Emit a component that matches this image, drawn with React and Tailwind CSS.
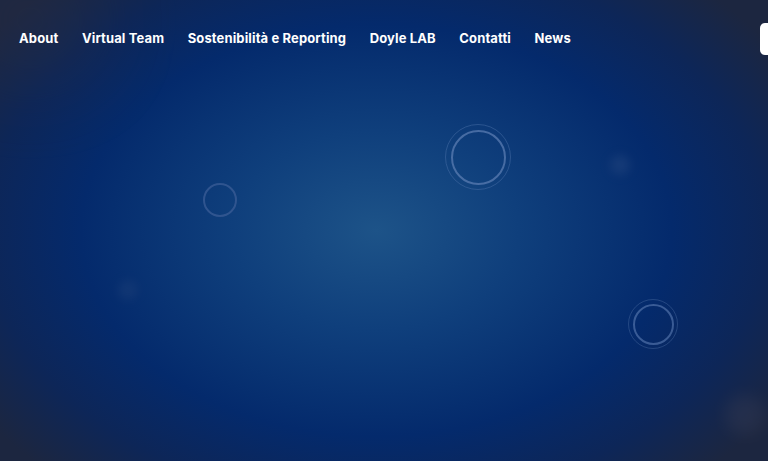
export default function App() {
  const items = ["About", "Virtual Team", "Sostenibilità e Reporting", "Doyle LAB", "Contatti", "News"];
  return (
    <div className="relative w-[768px] h-[461px] overflow-hidden bg-[#1c2640]" style={{ fontFamily: "Inter, 'Open Sans', sans-serif" }}>
      <div className="absolute inset-0 bg-[radial-gradient(ellipse_62%_72%_at_49%_50%,#1d5388_0%,#0f3f7c_30%,#042a6c_62%,#0d2658_82%,#1c2640_100%)]" />
      <div className="absolute -left-10 -top-10 w-[140px] h-[120px] rounded-full bg-[#2a2f45] opacity-40 blur-2xl" />
      {/* glows */}
      <div className="absolute left-[610px] top-[155px] w-5 h-5 rounded-full bg-[#24467f] opacity-50 blur-[5px]" />
      <div className="absolute left-[118px] top-[280px] w-5 h-5 rounded-full bg-[#21427a] opacity-40 blur-[5px]" />
      <div className="absolute left-[725px] top-[395px] w-10 h-10 rounded-full bg-[#363c54] opacity-40 blur-[8px]" />
      {/* rings */}
      <div className="absolute left-[445px] top-[124px] w-[66px] h-[66px] rounded-full border border-[#4a6fa8]/50 flex items-center justify-center">
        <div className="w-[55px] h-[55px] rounded-full border-2 border-[#5f80b5]/70" />
      </div>
      <div className="absolute left-[203px] top-[183px] w-[34px] h-[34px] rounded-full border-2 border-[#3f5f98]/70" />
      <div className="absolute left-[628px] top-[299px] w-[50px] h-[50px] rounded-full border border-[#4a6aa0]/45 flex items-center justify-center">
        <div className="w-[41px] h-[41px] rounded-full border-2 border-[#5676ad]/65" />
      </div>
      <header className="relative flex items-center h-[78px] pl-[19px]">
        <nav className="flex items-center gap-[23.5px] text-white text-[13px] font-bold tracking-[0.01em]">
          {items.map((t) => (
            <a key={t} className="whitespace-nowrap">{t}</a>
          ))}
        </nav>
        <div className="ml-auto mr-[-32px] w-10 h-[32px] rounded-[5px] bg-white" />
      </header>
    </div>
  );
}
